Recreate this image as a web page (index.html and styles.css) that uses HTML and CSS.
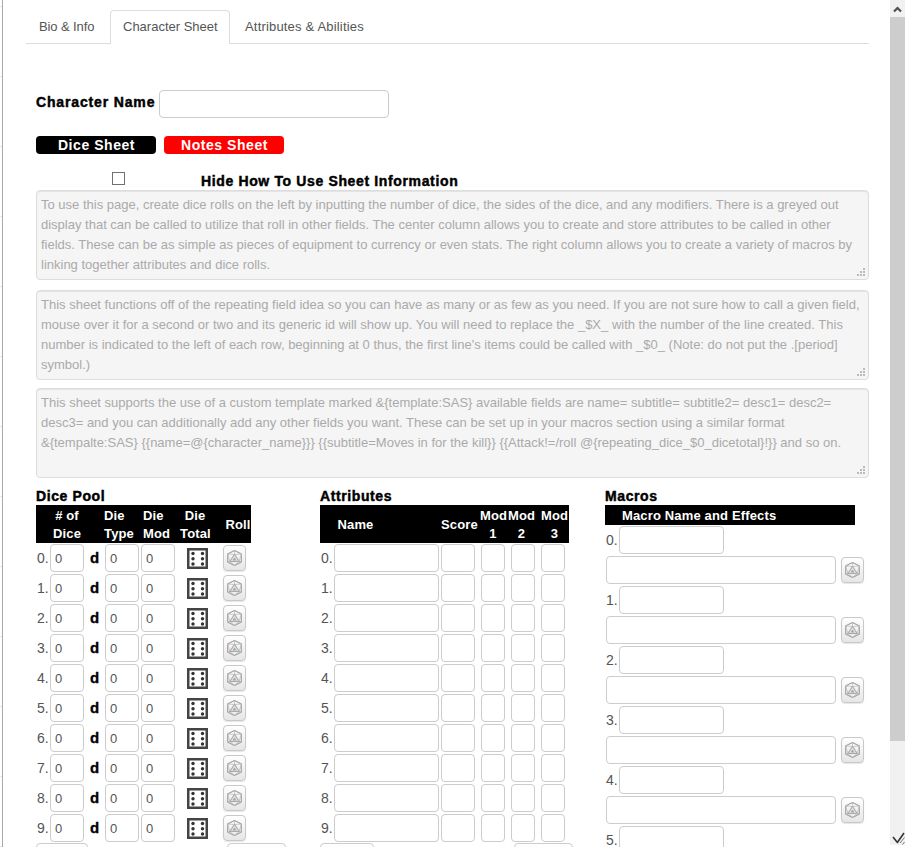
FILE: index.html
```html
<!DOCTYPE html>
<html lang="en">
<head>
<meta charset="utf-8">
<title>Character Sheet</title>
<link rel="stylesheet" href="styles.css">
</head>
<body>
<svg class="defs" width="0" height="0" aria-hidden="true">
  <symbol id="d20" viewBox="0 0 15 16">
    <g fill="none" stroke-width=".7">
      <g stroke="#e6b48c" transform="translate(-.5 0)"><path d="M7.500.5 14.500 4v8l-7 3.500L.5 12V4zM7.500 4.500 12 11.500H3z"/></g>
      <g stroke="#98c4e0" transform="translate(.5 0)"><path d="M7.500.5 14.500 4v8l-7 3.500L.5 12V4zM7.500 4.500 12 11.500H3z"/></g>
      <path d="M7.500.5 14.500 4v8l-7 3.500L.5 12V4z" stroke="#999"/>
      <path d="M7.500.5v4M.5 4l7 .5 7-.5M.5 4 3 11.500M14.500 4 12 11.500M3 11.500.5 12M12 11.500l2.500.5M3 11.500l4.500 4 4.500-4" stroke="#b4b4b4"/>
    </g>
    <path d="M7.500 4.500 12 11.500H3z" fill="#e2e2e2" stroke="#9a9a9a" stroke-width=".7"/>
    <path d="M7.500 7.500 9.500 10.500h-4z" fill="#a6a6a6"/>
  </symbol>
  <symbol id="die" viewBox="0 0 21 21">
    <rect x="1.250" y="1.250" width="18.500" height="18.500" fill="#fff" stroke="#444" stroke-width="2.500"/>
    <g fill="#333"><circle cx="6" cy="5.500" r="1.700"/><circle cx="6" cy="10.800" r="1.700"/><circle cx="6" cy="16" r="1.700"/><circle cx="15.500" cy="5.500" r="1.700"/><circle cx="15.500" cy="10.800" r="1.700"/><circle cx="15.500" cy="16" r="1.700"/></g>
  </symbol>
</svg>
<div class="window">
  <main class="page">
    <nav class="tabs">
      <a class="tab tab-bio">Bio &amp; Info</a>
      <a class="tab tab-active">Character Sheet</a>
      <a class="tab tab-attr">Attributes &amp; Abilities</a>
    </nav>
    <div class="name-row">
      <label class="heavy name-label">Character Name</label>
      <input class="field field-name" type="text">
    </div>
    <div class="switches">
      <span class="switch switch-black">Dice Sheet</span>
      <span class="switch switch-red">Notes Sheet</span>
    </div>
    <div class="hide-row">
      <input class="check" type="checkbox">
      <span class="heavy hide-label">Hide How To Use Sheet Information</span>
    </div>
    <textarea class="info">To use this page, create dice rolls on the left by inputting the number of dice, the sides of the dice, and any modifiers. There is a greyed out display that can be called to utilize that roll in other fields. The center column allows you to create and store attributes to be called in other fields. These can be as simple as pieces of equipment to currency or even stats. The right column allows you to create a variety of macros by linking together attributes and dice rolls.</textarea>
    <textarea class="info">This sheet functions off of the repeating field idea so you can have as many or as few as you need. If you are not sure how to call a given field, mouse over it for a second or two and its generic id will show up. You will need to replace the _$X_ with the number of the line created. This number is indicated to the left of each row, beginning at 0 thus, the first line's items could be called with _$0_ (Note: do not put the .[period] symbol.)</textarea>
    <textarea class="info info-last">This sheet supports the use of a custom template marked &amp;&#8288;{template:SAS} available fields are name= subtitle= subtitle2= desc1= desc2= desc3= and you can additionally add any other fields you want. These can be set up in your macros section using a similar format &amp;&#8288;{tempalte:SAS} {{name=@{character_name}}} {{subtitle=Moves in for the kill}} {{Attack!=/roll @{repeating_dice_$0_dicetotal}!}} and so on.</textarea>

    <div class="columns">
      <section class="col col-dice">
        <h3 class="heavy col-title">Dice Pool</h3>
        <div class="thead thead-dice">
          <span class="th th-a"># of<br>Dice</span><span class="th th-b">Die<br>Type</span><span class="th th-c">Die<br>Mod</span><span class="th th-d">Die<br>Total</span><span class="th th-e">Roll</span>
        </div>
        <div class="drow"><span class="num">0.</span><input class="field f34" value="0"><b class="d">d</b><input class="field f34" value="0"><input class="field f34" value="0"><svg class="die"><use href="#die"/></svg><button class="roll"><svg class="d20"><use href="#d20"/></svg></button></div>
        <div class="drow"><span class="num">1.</span><input class="field f34" value="0"><b class="d">d</b><input class="field f34" value="0"><input class="field f34" value="0"><svg class="die"><use href="#die"/></svg><button class="roll"><svg class="d20"><use href="#d20"/></svg></button></div>
        <div class="drow"><span class="num">2.</span><input class="field f34" value="0"><b class="d">d</b><input class="field f34" value="0"><input class="field f34" value="0"><svg class="die"><use href="#die"/></svg><button class="roll"><svg class="d20"><use href="#d20"/></svg></button></div>
        <div class="drow"><span class="num">3.</span><input class="field f34" value="0"><b class="d">d</b><input class="field f34" value="0"><input class="field f34" value="0"><svg class="die"><use href="#die"/></svg><button class="roll"><svg class="d20"><use href="#d20"/></svg></button></div>
        <div class="drow"><span class="num">4.</span><input class="field f34" value="0"><b class="d">d</b><input class="field f34" value="0"><input class="field f34" value="0"><svg class="die"><use href="#die"/></svg><button class="roll"><svg class="d20"><use href="#d20"/></svg></button></div>
        <div class="drow"><span class="num">5.</span><input class="field f34" value="0"><b class="d">d</b><input class="field f34" value="0"><input class="field f34" value="0"><svg class="die"><use href="#die"/></svg><button class="roll"><svg class="d20"><use href="#d20"/></svg></button></div>
        <div class="drow"><span class="num">6.</span><input class="field f34" value="0"><b class="d">d</b><input class="field f34" value="0"><input class="field f34" value="0"><svg class="die"><use href="#die"/></svg><button class="roll"><svg class="d20"><use href="#d20"/></svg></button></div>
        <div class="drow"><span class="num">7.</span><input class="field f34" value="0"><b class="d">d</b><input class="field f34" value="0"><input class="field f34" value="0"><svg class="die"><use href="#die"/></svg><button class="roll"><svg class="d20"><use href="#d20"/></svg></button></div>
        <div class="drow"><span class="num">8.</span><input class="field f34" value="0"><b class="d">d</b><input class="field f34" value="0"><input class="field f34" value="0"><svg class="die"><use href="#die"/></svg><button class="roll"><svg class="d20"><use href="#d20"/></svg></button></div>
        <div class="drow"><span class="num">9.</span><input class="field f34" value="0"><b class="d">d</b><input class="field f34" value="0"><input class="field f34" value="0"><svg class="die"><use href="#die"/></svg><button class="roll"><svg class="d20"><use href="#d20"/></svg></button></div>
        <div class="controls controls-dice"><button class="ctl ctl-a" aria-label="Add"></button><button class="ctl ctl-b" aria-label="Modify"></button></div>
      </section>

      <section class="col col-attr">
        <h3 class="heavy col-title">Attributes</h3>
        <div class="thead thead-attr">
          <span class="th ta-name">Name</span><span class="th ta-score">Score</span><span class="th ta-m1">Mod<br>1</span><span class="th ta-m2">Mod<br>2</span><span class="th ta-m3">Mod<br>3</span>
        </div>
        <div class="arow"><span class="num num-a">0.</span><input class="field f105"><input class="field f34"><input class="field f24 m1"><input class="field f24"><input class="field f24"></div>
        <div class="arow"><span class="num num-a">1.</span><input class="field f105"><input class="field f34"><input class="field f24 m1"><input class="field f24"><input class="field f24"></div>
        <div class="arow"><span class="num num-a">2.</span><input class="field f105"><input class="field f34"><input class="field f24 m1"><input class="field f24"><input class="field f24"></div>
        <div class="arow"><span class="num num-a">3.</span><input class="field f105"><input class="field f34"><input class="field f24 m1"><input class="field f24"><input class="field f24"></div>
        <div class="arow"><span class="num num-a">4.</span><input class="field f105"><input class="field f34"><input class="field f24 m1"><input class="field f24"><input class="field f24"></div>
        <div class="arow"><span class="num num-a">5.</span><input class="field f105"><input class="field f34"><input class="field f24 m1"><input class="field f24"><input class="field f24"></div>
        <div class="arow"><span class="num num-a">6.</span><input class="field f105"><input class="field f34"><input class="field f24 m1"><input class="field f24"><input class="field f24"></div>
        <div class="arow"><span class="num num-a">7.</span><input class="field f105"><input class="field f34"><input class="field f24 m1"><input class="field f24"><input class="field f24"></div>
        <div class="arow"><span class="num num-a">8.</span><input class="field f105"><input class="field f34"><input class="field f24 m1"><input class="field f24"><input class="field f24"></div>
        <div class="arow"><span class="num num-a">9.</span><input class="field f105"><input class="field f34"><input class="field f24 m1"><input class="field f24"><input class="field f24"></div>
        <div class="controls controls-attr"><button class="ctl ctl-c" aria-label="Add"></button><button class="ctl ctl-d" aria-label="Modify"></button></div>
      </section>

      <section class="col col-macro">
        <h3 class="heavy col-title">Macros</h3>
        <div class="thead thead-macro"><span class="th tm-name">Macro Name and Effects</span></div>
        <div class="mrow"><span class="num num-m">0.</span><input class="field f105"></div>
        <div class="mrow2"><input class="field f230"><button class="roll roll-m"><svg class="d20"><use href="#d20"/></svg></button></div>
        <div class="mrow"><span class="num num-m">1.</span><input class="field f105"></div>
        <div class="mrow2"><input class="field f230"><button class="roll roll-m"><svg class="d20"><use href="#d20"/></svg></button></div>
        <div class="mrow"><span class="num num-m">2.</span><input class="field f105"></div>
        <div class="mrow2"><input class="field f230"><button class="roll roll-m"><svg class="d20"><use href="#d20"/></svg></button></div>
        <div class="mrow"><span class="num num-m">3.</span><input class="field f105"></div>
        <div class="mrow2"><input class="field f230"><button class="roll roll-m"><svg class="d20"><use href="#d20"/></svg></button></div>
        <div class="mrow"><span class="num num-m">4.</span><input class="field f105"></div>
        <div class="mrow2"><input class="field f230"><button class="roll roll-m"><svg class="d20"><use href="#d20"/></svg></button></div>
        <div class="mrow"><span class="num num-m">5.</span><input class="field f105"></div>
      </section>
    </div>
  </main>
  <aside class="scrollbar">
    <div class="sb-arrow"><svg width="15" height="17" viewBox="0 0 15 17"><path d="M4 11.500 7.500 8 11 11.500" fill="none" stroke="#505050" stroke-width="2.200"/></svg></div>
    <div class="sb-thumb"></div>
    <div class="sb-rest"><svg class="sb-grip" width="15" height="13" viewBox="0 0 15 13"><path d="M3 5 7 10M7 11 14 1" fill="none" stroke="#333" stroke-width="1.600"/><path d="M10 11 14.500 5.500M12.500 12.500 14.500 10" fill="none" stroke="#777" stroke-width="1"/></svg></div>
  </aside>
  <div class="edge"></div>
</div>
</body>
</html>
```

FILE: styles.css
```css
* { box-sizing: border-box; }
html, body { margin: 0; height: 100%; overflow: hidden; background: #fff; }
body { font-family: "Liberation Sans", Arial, sans-serif; font-size: 13px; color: #404040; }
.defs { position: absolute; }
.window { display: flex; height: 847px; width: 908px; overflow: hidden; }
.window::before {
  content: ""; flex: none; width: 2px;
  background: repeating-linear-gradient(to bottom, #e6e6e6 0 1px, #fff 1px 70px) 0 6px;
}
.page {
  width: 888px; height: 847px; overflow: hidden; flex: none;
  padding: 10px 21px 0 23px;
  border-left: 1px solid #aaa;
}
.scrollbar { width: 15px; height: 845px; flex: none; display: flex; flex-direction: column; background: #f1f1f1; }
.sb-arrow { height: 17px; }
.sb-arrow svg { display: block; }
.sb-thumb { height: 724px; background: #cdcdcd; }
.sb-rest { flex: 1; display: flex; align-items: flex-end; }
.sb-grip { display: block; }
.edge { flex: 1; background: #fff; }

.tabs { display: flex; border-bottom: 1px solid #ddd; height: 34px; gap: 2px; }
.tab { height: 34px; padding: 7px 12px 8px; border: 1px solid transparent; border-bottom: 0; line-height: 18px; color: #555; border-radius: 4px 4px 0 0; white-space: nowrap; }
.tab-active { border-color: #ddd; background: #fff; width: 120px; }
.tab-bio { width: 82px; letter-spacing: -.1px; }
.tab-attr { letter-spacing: .18px; }

.heavy { font-weight: bold; font-size: 14px; color: #000; letter-spacing: .6px; -webkit-text-stroke: .45px #000; }
.field {
  height: 28px; border: 1px solid #ccc; border-radius: 4px; background: #fff;
  padding: 4px; margin: 0; font: 13px/18px "Liberation Sans", Arial, sans-serif; color: #555; flex: none;
}
.name-row { display: flex; align-items: center; margin: 46px 0 0 10px; height: 28px; gap: 4px; }
.name-label { position: relative; top: -2px; letter-spacing: .85px; white-space: nowrap; }
.field-name { width: 230px; }
.switches { display: flex; gap: 8px; margin: 18px 0 0 10px; }
.switch { width: 120px; height: 18px; padding-left: 1px; border-radius: 4px; color: #fff; font-size: 14px; font-weight: bold; text-align: center; line-height: 18px; letter-spacing: .55px; }
.switch-black { background: #000; }
.switch-red { background: #f00; }
.hide-row { display: flex; height: 36px; margin-left: 10px; }
.check { appearance: none; width: 13px; height: 13px; margin: 18px 0 0 76px; flex: none; border: 1px solid #707070; background: #fff; border-radius: 0; }
.hide-label { margin: 19px 0 0 76px; line-height: 17px; white-space: nowrap; letter-spacing: .64px; }

.info {
  display: block; width: 833px; height: 90px; margin: 0 0 10px 10px; padding: 4px;
  border: 1px solid #ddd; border-radius: 4px; color: #aaa; resize: none;
  font: 13px/20px "Liberation Sans", Arial, sans-serif; overflow: hidden;
  box-shadow: inset 0 1px 1px rgba(0,0,0,.075);
  background-color: #f5f5f5;
  background-image:
    linear-gradient(#bbb, #bbb), linear-gradient(#bbb, #bbb), linear-gradient(#bbb, #bbb),
    linear-gradient(#bbb, #bbb), linear-gradient(#bbb, #bbb), linear-gradient(#bbb, #bbb);
  background-repeat: no-repeat;
  background-size: 2px 2px;
  background-position:
    right 3px bottom 3px, right 6px bottom 3px, right 9px bottom 3px,
    right 3px bottom 6px, right 6px bottom 6px, right 3px bottom 9px;
}
.info-last { margin-bottom: 0; margin-top: -2px; }

.columns { display: flex; margin: 10px 0 0 10px; }
.col-dice { width: 284px; flex: none; }
.col-attr { width: 285px; flex: none; }
.col-macro { width: 264px; flex: none; }
.col-title { margin: 0; height: 17px; line-height: 17px; }
.thead { display: flex; background: #000; color: #fff; font-size: 13px; font-weight: bold; height: 38px; line-height: 18px; letter-spacing: .15px; }
.thead-dice { width: 215px; }
.thead-attr { width: 249px; }
.thead-macro { width: 250px; height: 20px; }
.th { display: block; text-align: center; padding-top: 2px; white-space: nowrap; }
.th-a { margin-left: 14px; width: 34px; }
.th-b { margin-left: 20px; width: 32px; text-align: left; }
.th-c { margin-left: 7px; width: 30px; text-align: left; }
.th-d { margin-left: 7px; width: 30px; }
.th-e { margin-left: 15px; width: 26px; padding-top: 11px; }
.ta-name { margin-left: 17px; width: 37px; padding-top: 11px; }
.ta-score { margin-left: 67px; width: 36px; padding-top: 11px; }
.ta-m1 { margin-left: 3px; width: 26px; }
.ta-m2 { margin-left: 2px; width: 27px; }
.ta-m3 { margin-left: 6px; width: 27px; }
.tm-name { margin-left: 17px; }

.drow, .arow, .mrow, .mrow2 { display: flex; align-items: flex-start; height: 30px; padding-top: 1px; }
.num { width: 14px; flex: none; font-size: 14px; color: #555; line-height: 28px; padding-left: 1px; }
.d { width: 21px; flex: none; text-align: center; color: #000; font-size: 15px; line-height: 28px; -webkit-text-stroke: .3px #000; }
.f34 { width: 34px; }
.drow .f34 + .f34 { margin-left: 2px; }
.die { width: 21px; height: 21px; margin: 4px 0 0 12px; flex: none; }
.roll {
  width: 23px; height: 26px; flex: none; margin: 1px 0 0 15px; padding: 0; display: flex; align-items: center; justify-content: center;
  border: 1px solid #c8c8c8; border-radius: 4px; background: linear-gradient(#fff, #e6e6e6);
  box-shadow: 0 1px 1px rgba(0,0,0,.1);
}
.d20 { width: 15px; height: 16px; display: block; }
.arow .f34 { margin-left: 2px; }
.f105 { width: 105px; }
.f24 { width: 24px; margin-left: 6px; }
.f230 { width: 230px; }
.num-m { width: 14px; }
.mrow2 { padding-left: 1px; }
.roll-m { margin-left: 5px; }

.controls { display: flex; height: 30px; }
.ctl {
  height: 26px; margin: 0; padding: 0; border: 1px solid #ccc; border-radius: 4px; background: linear-gradient(#fff, #e6e6e6);
}
.ctl-a { width: 52px; }
.ctl-b { width: 59px; margin-left: 139px; }
.ctl-c { width: 54px; }
.ctl-d { width: 59px; margin-left: 140px; }
```
